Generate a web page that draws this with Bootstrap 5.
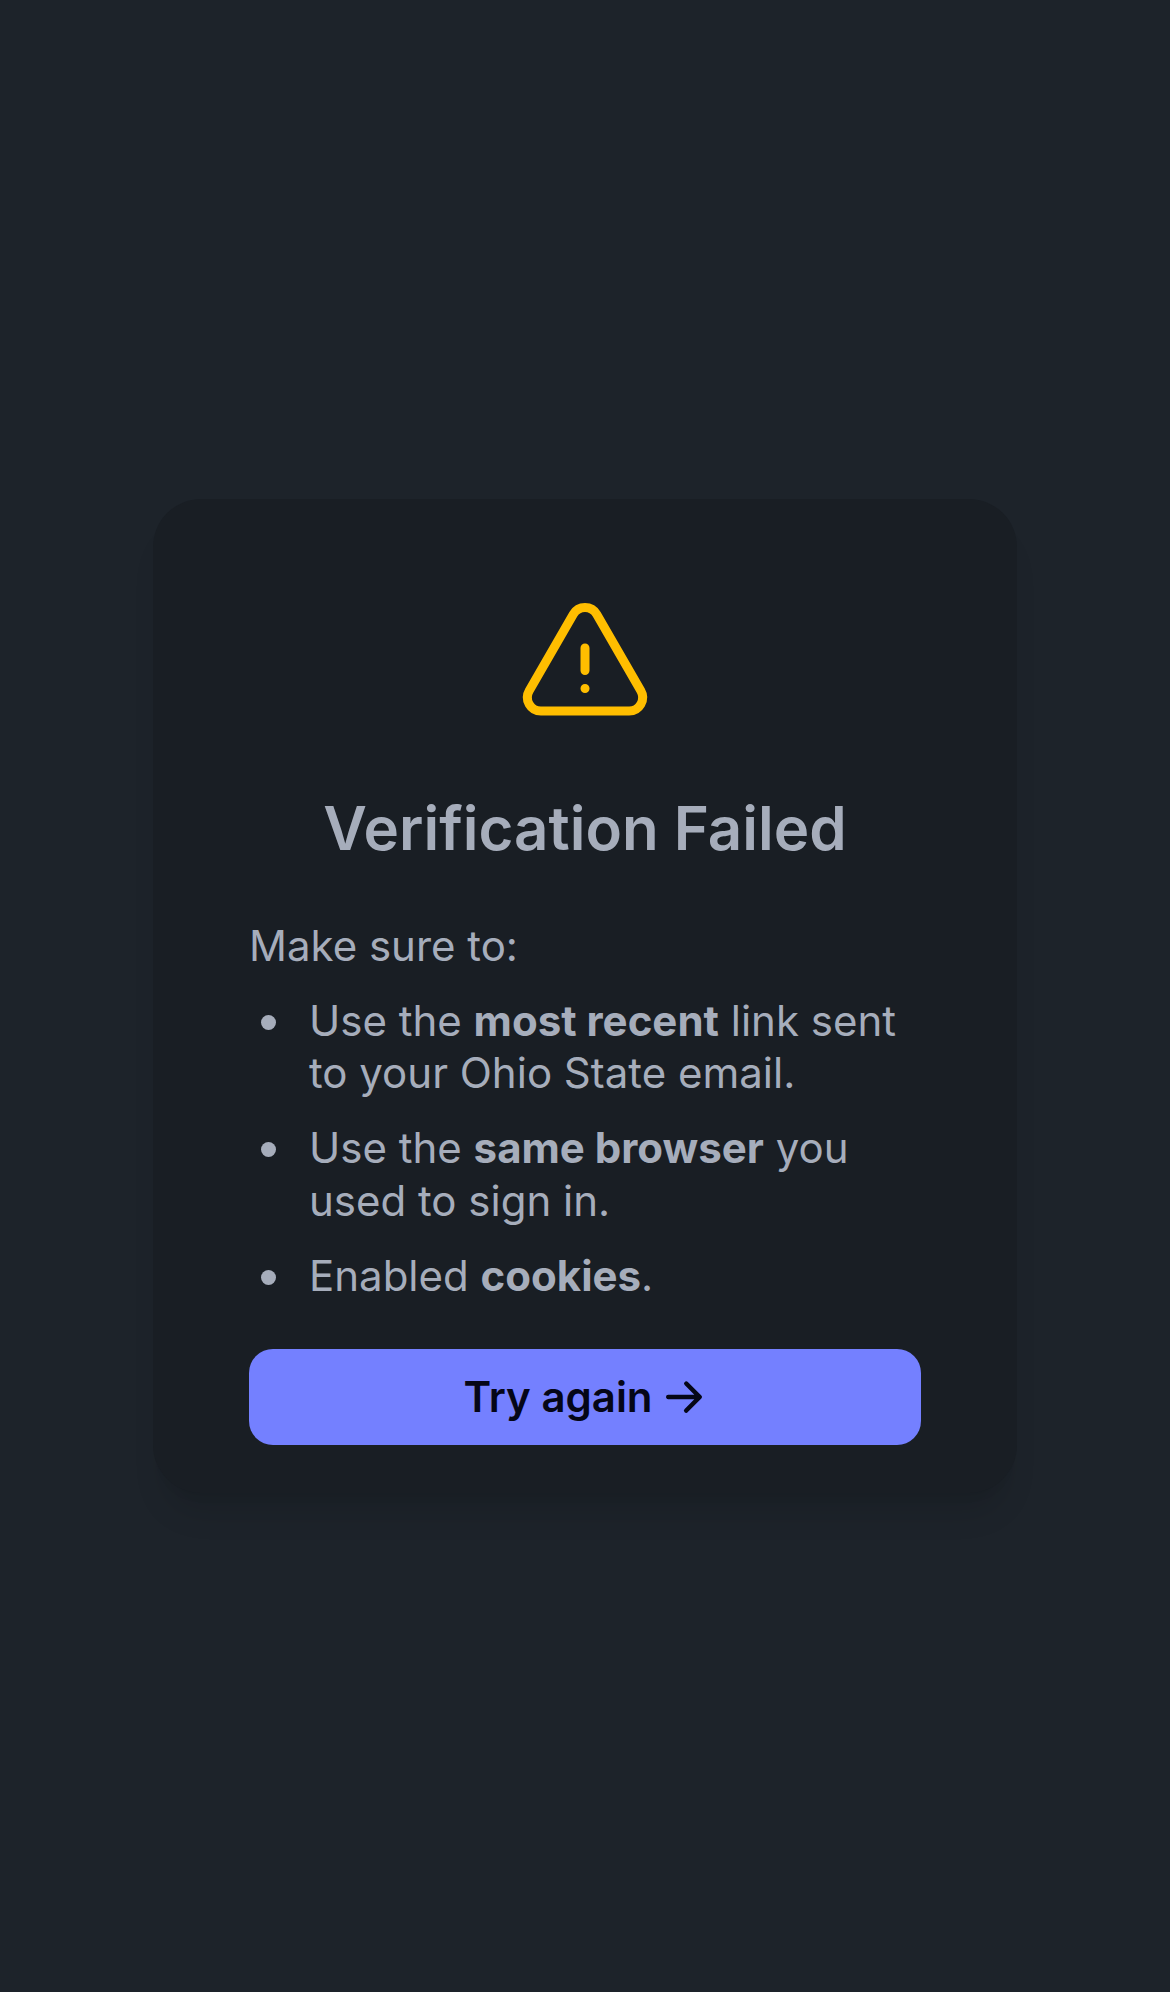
<!DOCTYPE html>
<html lang="en" data-bs-theme="dark">
<head>
<meta charset="utf-8">
<meta name="viewport" content="width=device-width, initial-scale=1">
<title>Verification Failed</title>
<link href="https://cdn.jsdelivr.net/npm/bootstrap@5.3.0/dist/css/bootstrap.min.css" rel="stylesheet">
<style>
  body { background: #1d232a; color: #a6adbb; font-family: Inter, "Liberation Sans", sans-serif; font-size: 42px; line-height: 1.25; }
  .verify-card { width: 864px; padding: 95px 96px 48px; border-radius: 48px; background: #191e24; color: inherit;
    box-shadow: 0 30px 30px -9px rgba(0,0,0,.1), 0 12px 12px -12px rgba(0,0,0,.1); }
  .warn-icon { width: 144px; height: 144px; color: #ffbe00; }
  .verify-title { color: inherit; font-size: 60px; line-height: 84px; font-weight: 600; margin: 48px 0 49.5px; }
  .intro { margin: 0 0 22.5px; }
  .steps li { padding-left: 60px; margin-bottom: 22.5px; position: relative; }
  .steps li::before { content: ""; position: absolute; left: 12px; top: 20px; width: 15px; height: 15px; border-radius: 50%; background: currentColor; }
  .steps b { font-weight: 700; }
  .try-btn { --bs-btn-bg: #7480ff; --bs-btn-color: #050617; --bs-btn-hover-bg: #6470f0; --bs-btn-hover-color: #050617;
    height: 96px; border: 0; border-radius: 24px; font-size: 42px; font-weight: 600; gap: 7.5px; margin-top: 24.5px; padding: 0 0 0 1.5px; line-height: 1; }
  .try-btn svg { width: 48px; height: 48px; }
</style>
</head>
<body>
<main class="d-flex align-items-center justify-content-center min-vh-100">
  <section class="card border-0 verify-card">
    <svg class="warn-icon align-self-center" viewBox="0 0 24 24" fill="none" stroke="currentColor" stroke-width="1.5" stroke-linecap="round" stroke-linejoin="round" aria-hidden="true"><path d="M12 9v3.75m-9.303 3.376c-.866 1.5.217 3.374 1.948 3.374h14.71c1.73 0 2.813-1.874 1.948-3.374L13.949 3.378c-.866-1.5-3.032-1.5-3.898 0L2.697 16.126ZM12 15.75h.007v.008H12v-.008Z"/></svg>
    <h1 class="verify-title text-center">Verification Failed</h1>
    <p class="intro">Make sure to:</p>
    <ul class="steps list-unstyled mb-0">
      <li>Use the <b>most recent</b> link sent to your Ohio State email.</li>
      <li>Use the <b>same browser</b> you used to sign in.</li>
      <li>Enabled <b>cookies</b>.</li>
    </ul>
    <button type="button" class="btn try-btn w-100 d-flex align-items-center justify-content-center">
      <span>Try again</span>
      <svg viewBox="0 0 16 16" fill="currentColor" aria-hidden="true"><path d="M2 8c0 .414.336.75.75.75h8.69l-3.22 3.22a.75.75 0 1 0 1.06 1.06l4.5-4.5a.75.75 0 0 0 0-1.06l-4.5-4.5a.75.75 0 0 0-1.06 1.06l3.22 3.22H2.75A.75.75 0 0 0 2 8Z"/></svg>
    </button>
  </section>
</main>
<script src="https://cdn.jsdelivr.net/npm/bootstrap@5.3.0/dist/js/bootstrap.bundle.min.js"></script>
</body>
</html>
